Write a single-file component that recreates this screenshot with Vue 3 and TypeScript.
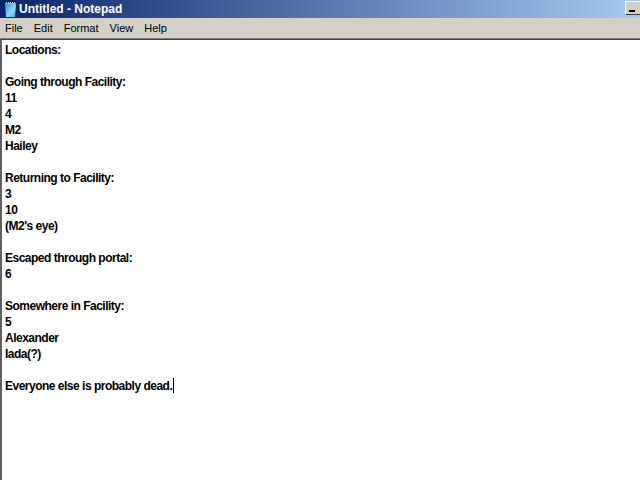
<script setup lang="ts">
const lines: string[] = [
  'Locations:', '', 'Going through Facility:', '11', '4', 'M2', 'Hailey', '',
  'Returning to Facility:', '3', '10', "(M2's eye)", '', 'Escaped through portal:', '6', '',
  'Somewhere in Facility:', '5', 'Alexander', 'Iada(?)', '',
]
</script>

<template>
  <div class="window">
    <div class="titlebar">
      <svg class="app-icon" width="16" height="16" viewBox="0 0 16 16">
        <defs>
          <linearGradient id="pad" x1="0" y1="0" x2="1" y2="1">
            <stop offset="0" stop-color="#2f8fd8" />
            <stop offset="0.6" stop-color="#8fd8f4" />
            <stop offset="1" stop-color="#4aa8e0" />
          </linearGradient>
        </defs>
        <path d="M3 2h10l1 1-1 13H4z" fill="url(#pad)" />
        <path d="M4 2h9" stroke="#c8c8c8" stroke-dasharray="1 1" stroke-width="2" />
      </svg>
      <span class="title">Untitled - Notepad</span>
      <span class="spacer"></span>
      <button class="min-btn"><i></i></button>
    </div>
    <div class="menubar">
      <span>File</span><span>Edit</span><span>Format</span><span>View</span><span>Help</span>
    </div>
    <div class="edit">
      <div v-for="(l, i) in lines" :key="i" class="line">{{ l }}</div>
      <div class="line">Everyone else is probably dead.<span class="caret"></span></div>
    </div>
  </div>
</template>

<style>
html, body { margin: 0; overflow: hidden; background: #fff; }
</style>

<style scoped>
.window {
  width: 640px;
  height: 480px;
  display: flex;
  flex-direction: column;
  overflow: hidden;
  font-family: "Liberation Sans", Arial, sans-serif;
}
.titlebar {
  height: 18px;
  display: flex;
  align-items: center;
  padding-left: 2px;
  gap: 1px;
  background: linear-gradient(90deg, #0a246a 0%, #a6caf0 100%);
  color: #fff;
}
.app-icon { flex: none; }
.title { font: bold 12px "Liberation Sans", Arial, sans-serif; }
.spacer { flex: 1; }
.min-btn {
  width: 15px;
  height: 14px;
  margin-bottom: 2px;
  padding: 0;
  border: none;
  border-top: 1px solid #fff;
  border-left: 1px solid #fff;
  border-bottom: 1px solid #404040;
  background: #d4d0c8;
  position: relative;
}
.min-btn i {
  position: absolute;
  left: 3px;
  top: 8px;
  width: 6px;
  height: 2px;
  background: #000;
}
.menubar {
  height: 20px;
  display: flex;
  align-items: center;
  gap: 11px;
  padding-left: 5px;
  background: #d4d0c8;
  font: 11px "Liberation Sans", Arial, sans-serif;
  color: #000;
  border-bottom: 1px solid #808080;
  flex: none;
}
.edit {
  flex: 1;
  background: #fff;
  border-top: 1px solid #404040;
  border-left: 2px solid #606060;
  padding: 2px 0 0 3px;
}
.line {
  height: 16px;
  font: bold 12px/16px "Liberation Sans", Arial, sans-serif;
  letter-spacing: -0.5px;
  color: #000;
  white-space: pre;
}
.caret {
  display: inline-block;
  width: 1px;
  height: 15px;
  margin-left: 1px;
  background: #000;
  vertical-align: -3px;
}
</style>
